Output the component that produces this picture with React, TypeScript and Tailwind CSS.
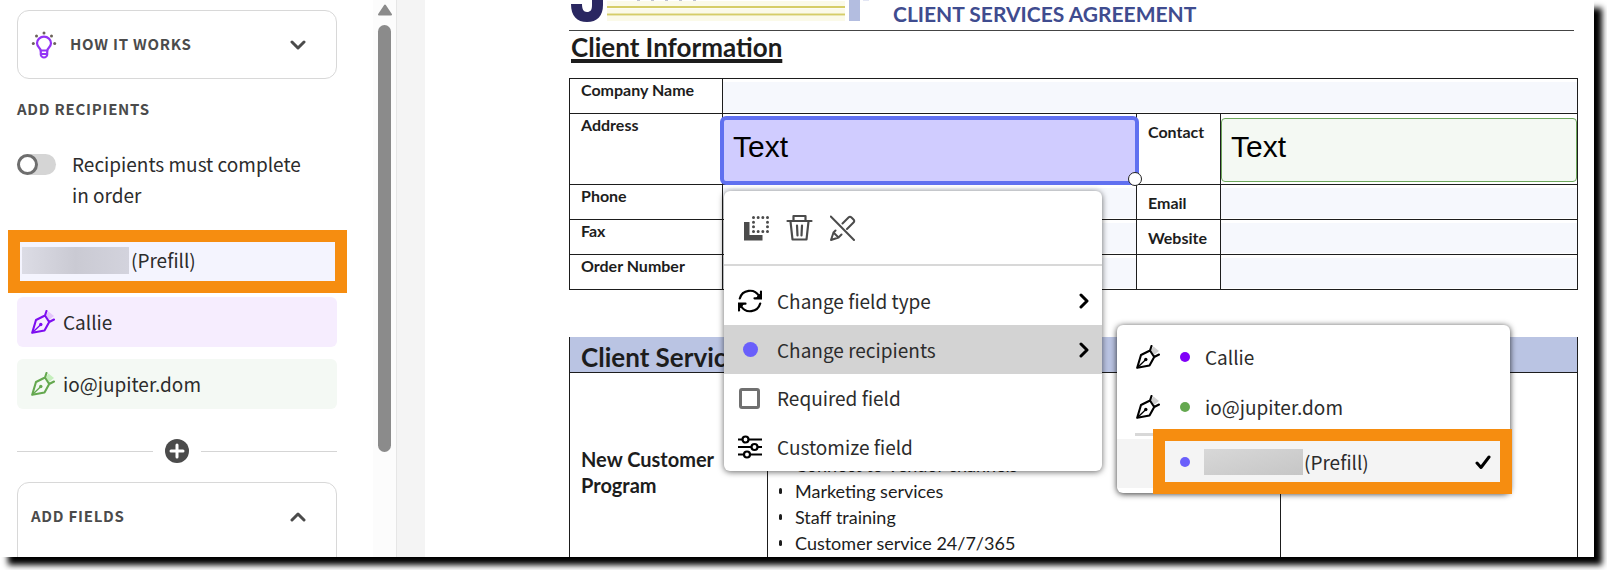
import { useState } from 'react';
import type { ReactNode } from 'react';
import { clsx } from 'clsx';

type Recipient = { id: string; name: string; row: string; pen: string; tip: string; dot: string };

const recipients: Recipient[] = [
  { id: 'callie', name: 'Callie', row: 'bg-[#f6edfe]', pen: 'text-[#7d0df0]', tip: '#e3c5fb', dot: 'bg-[#8000f8]' },
  { id: 'io', name: 'io@jupiter.dom', row: 'bg-[#f4f9f4]', pen: 'text-[#64a84f]', tip: '#c5efbd', dot: 'bg-[#64a84f]' },
];

const services = ['Connect to Vendor channels', 'Marketing services', 'Staff training', 'Customer service 24/7/365'];

function PenIcon({ tip, className }: { tip: string; className?: string }) {
  return (
    <svg viewBox="0 0 24 24" className={clsx('size-6 shrink-0', className)} fill="none" stroke="currentColor" strokeWidth="2.1" strokeLinecap="round" strokeLinejoin="round">
      <path d="M15 5 17.500 1.500l5.500 4.500-5 4z" fill={tip} stroke="none" />
      <path d="M15.500 1 14 5.500 5 10 1.200 22.800 13.500 20.500 18.200 12 23 9.500M14 5.500l4.200 6.500" />
      <path d="M1.500 22.500 8.800 15.500" strokeWidth="1.300" />
      <circle cx="9.800" cy="14.500" r="1.700" fill="currentColor" stroke="none" />
    </svg>
  );
}

function Chevron({ className }: { className?: string }) {
  return (
    <svg viewBox="0 0 16 16" className={clsx('size-4 shrink-0', className)} fill="none" stroke="currentColor" strokeWidth="3" strokeLinecap="round" strokeLinejoin="round">
      <path d="m2 5 6 6 6-6" />
    </svg>
  );
}

function BulbIcon() {
  return (
    <svg viewBox="0 0 26 28" className="h-7 w-[26px] shrink-0" fill="none">
      <g fill="#6b6259">
        <circle cx="13" cy="2" r="1.500" />
        <circle cx="5.500" cy="5" r="1.500" />
        <circle cx="20.500" cy="5" r="1.500" />
        <circle cx="2.300" cy="12.500" r="1.500" />
        <circle cx="23.700" cy="12.500" r="1.500" />
      </g>
      <path d="M9.800 19.500c0-2-3.800-3.600-3.800-7.300a7 6.500 0 0 1 14 0c0 3.700-3.800 5.300-3.800 7.300z" stroke="#9333f5" strokeWidth="2.200" />
      <path d="M9.800 19v4.500c0 1.500 1.500 3 3.200 3s3.200-1.500 3.200-3V19M10 23h6" stroke="#9333f5" strokeWidth="2.200" />
    </svg>
  );
}

function DuplicateIcon() {
  return (
    <svg viewBox="0 0 26 26" className="size-[26px]" fill="none">
      <path d="M0 7h5.500v13h13v5.500H0z" fill="#4b4b4b" />
      <path d="M9.500 2.500h14v14h-14z" stroke="#4b4b4b" strokeWidth="3" strokeLinecap="round" strokeDasharray="0 4.667" />
    </svg>
  );
}

function TrashIcon() {
  return (
    <svg viewBox="0 0 28 28" className="size-7" fill="none" stroke="#4b4b4b" strokeWidth="2.200" strokeLinecap="round" strokeLinejoin="round">
      <path d="M1.500 7h24M7.500 6.500V2h12v4.500M4.500 7.500l2 18h14l2-18M11 11.500l.5 10M16 11.500l-.5 10" />
    </svg>
  );
}

function PenOffIcon() {
  return (
    <svg viewBox="0 0 26 26" className="size-[26px]" fill="none" stroke="#4b4b4b" strokeWidth="2" strokeLinecap="round" strokeLinejoin="round">
      <path d="M0.800 1.500 24 25M12.500 8.500l6-6q1.500-1.500 3 0l2 2q1.500 1.500 0 3l-6.500 6.500M5.500 15.500 3.500 17.500 1 25l7.500-2.500 3-3M3.500 17.500l5 5" />
    </svg>
  );
}

function SwapIcon() {
  return (
    <svg viewBox="0 0 24 24" className="size-6" fill="none" stroke="#000" strokeWidth="2.200" strokeLinecap="round">
      <path d="M1.800 9.500A10.500 10.500 0 0 1 21 7M22.200 14.500A10.500 10.500 0 0 1 3 17" />
      <path d="M23 2.500v6.800h-6.500M1 21.500v-6.800h6.500" />
      <path d="M22 5.500v3h-3zM2 18.500v-3h3z" fill="#000" strokeWidth="1" />
    </svg>
  );
}

function SlidersIcon() {
  return (
    <svg viewBox="0 0 24 24" className="size-6" fill="#fff" stroke="#000" strokeWidth="2.200">
      <path d="M0 4.500h24M0 12h24M0 19.500h24" />
      <circle cx="7.500" cy="4.500" r="3" />
      <circle cx="16.500" cy="12" r="3" />
      <circle cx="9" cy="19.500" r="3" />
    </svg>
  );
}

function Sidebar() {
  const [ordered, setOrdered] = useState(false);

  return (
    <aside className="flex w-[397px] shrink-0 border-r border-[#e6e6e6] bg-white font-['Noto_Sans_CJK_SC',sans-serif] text-[#2c2c2c]">
      <div className="flex flex-1 flex-col pt-[10px] pr-9 pl-[17px]">
        <button type="button" className="flex h-[69px] shrink-0 items-center rounded-xl border border-[#d8d8d8] pr-[30px] pl-[13px] text-[#4b4b4b]">
          <BulbIcon />
          <span className="ml-[13px] flex-1 text-left text-[15px] font-bold tracking-wider">HOW IT WORKS</span>
          <Chevron />
        </button>

        <h2 className="mt-[18px] text-[15px] leading-6 font-bold tracking-wider text-[#4b4b4b]">ADD RECIPIENTS</h2>

        <label className="mt-[27px] flex gap-4 text-[19px] leading-[31px]">
          <span className="mt-[6px] h-[21px] w-[39px] shrink-0 rounded-full bg-[#d5d5d5]">
            <input type="checkbox" className="peer sr-only" checked={ordered} onChange={(e) => setOrdered(e.target.checked)} />
            <span className="block size-[21px] rounded-full border-3 border-[#6e6e6e] bg-white peer-checked:ml-auto" />
          </span>
          <span>
            Recipients must complete
            <br />
            in order
          </span>
        </label>

        <button type="button" className="mt-5 -mr-[10px] -ml-[9px] flex h-[63px] shrink-0 items-center gap-[2px] border-12 border-[#f68d10] bg-[#f4f4fe] pb-[2px] pl-[2px] text-[19px]">
          <span className="h-[27px] w-[107px] bg-linear-to-r from-[#dcdce5] via-[#cacad3] to-[#d3d3dd]" />
          (Prefill)
        </button>

        <div className="mt-[4px] flex flex-col gap-3">
          {recipients.map((r) => (
            <button key={r.id} type="button" className={clsx('flex h-[50px] items-center gap-2 rounded-md pl-[14px] text-[19px]', r.row)}>
              <PenIcon tip={r.tip} className={r.pen} />
              {r.name}
            </button>
          ))}
        </div>

        <div className="mt-[30px] flex items-center gap-3">
          <span className="h-px flex-1 bg-[#d5d5d5]" />
          <button type="button" aria-label="Add recipient" className="size-6 rounded-full bg-[#4b4b4b] text-white">
            <svg viewBox="0 0 24 24" className="size-6" stroke="currentColor" strokeWidth="3" strokeLinecap="round">
              <path d="M12 6v12M6 12h12" />
            </svg>
          </button>
          <span className="h-px flex-1 bg-[#d5d5d5]" />
        </div>

        <section className="mt-[19px] h-[140px] shrink-0 rounded-xl border border-[#d8d8d8]">
          <button type="button" className="flex h-[67px] w-full items-center justify-between pr-[30px] pl-[13px] text-[15px] font-bold tracking-wider text-[#4b4b4b]">
            ADD FIELDS
            <Chevron className="rotate-180" />
          </button>
        </section>
      </div>

      <div className="flex w-[23px] flex-col items-center bg-[#fcfcfc] pt-1">
        <svg viewBox="0 0 14 12" className="h-3 w-[14px] shrink-0">
          <path d="M7 1.500 13 10.500H1z" fill="#8b8b8b" stroke="#8b8b8b" strokeWidth="2" strokeLinejoin="round" />
        </svg>
        <span className="mt-[9px] h-[427px] w-[13px] rounded-full bg-[#8b8b8b]" />
      </div>
    </aside>
  );
}

function Logo() {
  return (
    <svg viewBox="0 0 300 24" className="h-6 w-[300px] shrink-0" fill="none">
      <path d="M2 4h11c0 5 1.500 8 5 8s5-2 5-7V0h11v5c0 11-6 17-16 17S2 16 2 4z" fill="#2a2761" />
      <path d="M38 3.500h238M38 11h238M38 18.500h238" stroke="#fbfae9" strokeWidth="5" />
      <path d="M38 7h238M38 14.500h238" stroke="#d6cd68" strokeWidth="2" />
      <path d="M68 0h66" stroke="#a9adc0" strokeWidth="1.500" strokeDasharray="3 11" />
      <path d="M280 0h11v21h-11z" fill="#b3bde0" />
      <path d="M294 0h9" stroke="#e3e6f4" strokeWidth="2" />
    </svg>
  );
}

function Label({ children, low }: { children?: ReactNode; low?: boolean }) {
  return (
    <th className={clsx('border border-[#1d1d1d] px-[11px] text-left align-top font-bold', low ? 'pt-2' : 'pt-px')}>
      {children}
    </th>
  );
}

function Field({ label, span }: { label: string; span?: number }) {
  return (
    <td colSpan={span} className="border border-[#1d1d1d] p-0 pt-[3px] align-top">
      <input aria-label={label} className="block h-[30px] w-full bg-[#f6f8fd] outline-none" />
    </td>
  );
}

function ClientTable() {
  return (
    <table className="mt-[15px] w-full table-fixed border-collapse text-[16px] leading-5">
      <colgroup>
        <col className="w-[153px]" />
        <col />
        <col className="w-[84px]" />
        <col className="w-[357px]" />
      </colgroup>
      <tbody>
        <tr className="h-[35px]">
          <Label>Company Name</Label>
          <Field label="Company Name" span={3} />
        </tr>
        <tr className="h-[71px]">
          <Label>Address</Label>
          <td className="relative border border-[#1d1d1d] p-0">
            <div className="absolute -inset-x-[3px] top-[2px] -bottom-[1px]">
              <input aria-label="Address" defaultValue="Text" className="size-full rounded-md border-4 border-[#6070f0] bg-[#d0ccff] px-[9px] pb-[7px] font-['Liberation_Sans',sans-serif] text-[30px] text-black outline-none" />
              <span className="absolute -right-[3px] -bottom-px size-[14px] rounded-full border border-[#222] bg-white" />
            </div>
          </td>
          <Label low>Contact</Label>
          <td className="relative border border-[#1d1d1d] p-0">
            <input aria-label="Contact" defaultValue="Text" className="absolute inset-x-0 top-[4px] h-[64px] w-full rounded-sm border border-[#6da75b] bg-[#f4f9f3] px-[9px] pb-[7px] font-['Liberation_Sans',sans-serif] text-[30px] text-black outline-none" />
          </td>
        </tr>
        <tr className="h-[35px]">
          <Label>Phone</Label>
          <Field label="Phone" />
          <Label low>Email</Label>
          <Field label="Email" />
        </tr>
        <tr className="h-[35px]">
          <Label>Fax</Label>
          <Field label="Fax" />
          <Label low>Website</Label>
          <Field label="Website" />
        </tr>
        <tr className="h-[35px]">
          <Label>Order Number</Label>
          <Field label="Order Number" />
          <Label low />
          <Field label="Other" />
        </tr>
      </tbody>
    </table>
  );
}

function ServicesTable() {
  return (
    <table className="mt-[47px] w-full table-fixed border-collapse">
      <colgroup>
        <col className="w-[198px]" />
        <col />
        <col className="w-[297px]" />
      </colgroup>
      <thead>
        <tr className="h-[35px] border-x border-b border-[#1d1d1d] bg-[#bac4e3]">
          <th colSpan={3} className="px-[11px] pt-[5px] text-left text-[26px] leading-[30px]">Client Services</th>
        </tr>
      </thead>
      <tbody>
        <tr className="h-[240px] align-top">
          <th className="border border-[#1d1d1d] px-[11px] pt-[73px] text-left text-[20px] leading-[26px]">New Customer Program</th>
          <td className="border border-[#1d1d1d] pt-[79px] pl-[11px] text-[18px] leading-[26px]">
            <ul>
              {services.map((s) => (
                <li key={s} className="flex items-center gap-[13px]">
                  <span className="h-[6px] w-[3px] rounded-full bg-[#1d1d1d]" />
                  {s}
                </li>
              ))}
            </ul>
          </td>
          <td className="border border-[#1d1d1d]" />
        </tr>
      </tbody>
    </table>
  );
}

function MenuRow({ icon, active, arrow, children }: { icon: ReactNode; active?: boolean; arrow?: boolean; children: ReactNode }) {
  return (
    <button type="button" className={clsx('flex h-[49px] w-full items-center pr-[10px] pl-[14px] text-left', active && 'bg-[#d3d3d3]')}>
      <span className="flex w-6 justify-center">{icon}</span>
      <span className="ml-[15px] flex-1">{children}</span>
      {arrow && <Chevron className="-rotate-90 text-black" />}
    </button>
  );
}

function FieldMenu() {
  return (
    <div className="absolute top-[191px] left-[299px] w-[378px] rounded-md bg-white font-['Noto_Sans_CJK_SC',sans-serif] text-[19px] leading-6 text-[#2c2c2c] shadow-[0_1px_6px_rgba(0,0,0,0.6)]">
      <div className="flex h-[75px] items-center gap-4 border-b-2 border-[#d8d8d8] px-5">
        <button type="button" aria-label="Duplicate"><DuplicateIcon /></button>
        <button type="button" aria-label="Delete"><TrashIcon /></button>
        <button type="button" aria-label="Clear"><PenOffIcon /></button>
      </div>
      <div className="pt-[10px]">
        <MenuRow icon={<SwapIcon />} arrow>Change field type</MenuRow>
        <MenuRow icon={<span className="size-[15px] rounded-full bg-[#6a5ffb]" />} active arrow>Change recipients</MenuRow>
        <label className="flex h-12 items-center pl-[15px]">
          <input type="checkbox" className="size-[21px] appearance-none rounded-[3px] border-3 border-[#707070] bg-white checked:bg-[#707070]" />
          <span className="ml-[17px]">Required field</span>
        </label>
        <MenuRow icon={<SlidersIcon />}>Customize field</MenuRow>
      </div>
    </div>
  );
}

function RecipientMenu() {
  return (
    <div className="absolute top-[325px] left-[692px] w-[393px] rounded-md bg-white pt-[7px] pb-[5px] font-['Noto_Sans_CJK_SC',sans-serif] text-[19px] leading-6 text-[#2c2c2c] shadow-[0_1px_6px_rgba(0,0,0,0.8)]">
      {recipients.map((r) => (
        <button key={r.id} type="button" className="flex h-[50px] w-full items-center pl-[19px] text-left">
          <PenIcon tip="#cfcfcf" className="text-black" />
          <span className={clsx('mr-[15px] ml-5 size-[10px] rounded-full', r.dot)} />
          {r.name}
        </button>
      ))}
      <div className="mx-[18px] mt-px h-[3px] bg-[#d8d8d8]" />
      <div className="mt-[3px] h-[49px] bg-[#f4f4f4]" />
      <button type="button" className="absolute -right-[2px] -bottom-[1px] flex h-[65px] w-[359px] items-center border-12 border-[#f68d10] bg-[#f4f4f4] pr-[9px] pl-[15px] text-left">
        <span className="mr-[14px] size-[10px] rounded-full bg-[#6a5ffb]" />
        <span className="mr-px h-[26px] w-[99px] bg-linear-to-br from-[#d8d8d8] to-[#c6c6c6]" />
        <span className="flex-1">(Prefill)</span>
        <svg viewBox="0 0 16 14" className="h-[14px] w-4" fill="none" stroke="#000" strokeWidth="3" strokeLinecap="round" strokeLinejoin="round">
          <path d="m2 8 4 4.500L14 2" />
        </svg>
      </button>
    </div>
  );
}

function AgreementPage() {
  return (
    <main className="relative flex-1 overflow-hidden bg-white pr-4 pl-[144px] font-[Lato,sans-serif] text-[#1d1d1d]">
      <header className="mr-1 flex h-[31px] items-start gap-6 border-b border-[#444]">
        <Logo />
        <p className="text-[21px] leading-7 font-bold text-[#3f4c8f]">CLIENT SERVICES AGREEMENT</p>
      </header>
      <h1 className="px-[2px] text-[26px] leading-8 font-bold underline decoration-4 underline-offset-2">Client Information</h1>
      <ClientTable />
      <ServicesTable />
      <FieldMenu />
      <RecipientMenu />
    </main>
  );
}

export default function App() {
  return (
    <div className="h-screen overflow-hidden bg-white pr-[13px] pb-[13px]">
      <div className="flex h-full shadow-[8px_8px_6px_#000]">
        <div className="flex min-w-0 flex-1 overflow-hidden">
          <Sidebar />
          <div className="w-7 shrink-0 bg-[#f4f4f4]" />
          <AgreementPage />
        </div>
      </div>
    </div>
  );
}
